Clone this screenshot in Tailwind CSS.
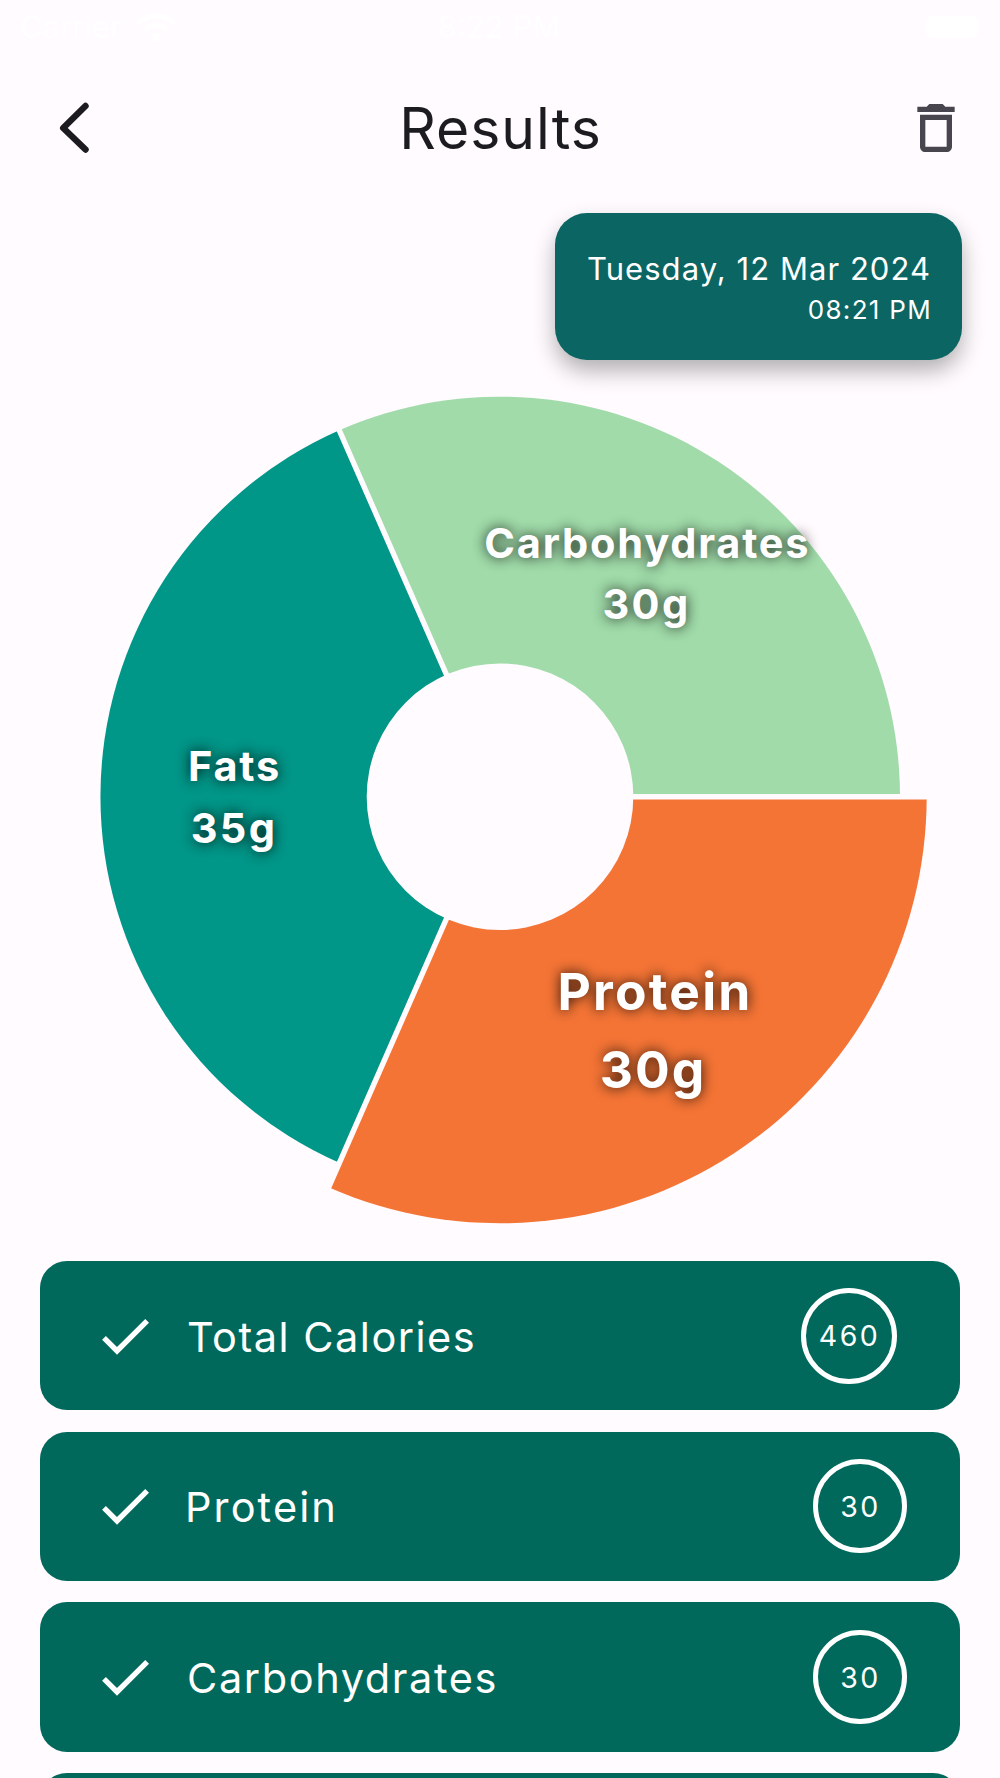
<!DOCTYPE html>
<html lang="en">
<head>
  <meta charset="UTF-8" />
  <meta name="viewport" content="width=device-width, initial-scale=1.0" />
  <title>Results</title>
  <script src="https://cdn.jsdelivr.net/npm/@tailwindcss/browser@4"></script>
</head>
<body class="bg-[#fffbff] font-['Inter',sans-serif]">
<div class="relative w-[1000px] h-[1778px] overflow-hidden">
  <!-- Status bar -->
  <div class="grid grid-cols-3 items-center h-[53px] pl-5 pr-[22px] text-white text-[31px] leading-none">
    <div class="flex items-center gap-[14px]">
      <span>Carrier</span>
      <svg class="w-10 h-7" viewBox="0 0 40 28" fill="none" stroke="currentColor" stroke-width="5">
        <path d="M2 10a26 26 0 0 1 36 0M9 17a16 16 0 0 1 22 0" />
        <circle cx="20" cy="24" r="2" />
      </svg>
    </div>
    <span class="text-center">8:22 PM</span>
    <div class="justify-self-end w-[52px] h-[22px] rounded-md bg-white"></div>
  </div>

  <!-- App bar -->
  <header class="flex items-center justify-between h-[149px] pl-[42px] pr-8">
    <svg class="w-16 h-16" viewBox="0 0 64 64" fill="none" stroke="#1c1b1f" stroke-width="6.4" stroke-linecap="round" stroke-linejoin="round">
      <path d="M43.5 10L21.2 32l22.3 21.5" />
    </svg>
    <h1 class="mr-[9px] pt-[2px] text-[57px] leading-none tracking-[1px] text-[#1c1b1f]">Results</h1>
    <svg class="w-16 h-16" viewBox="0 0 24 24" fill="#49454f">
      <path d="M6 19c0 1.1.9 2 2 2h8c1.1 0 2-.9 2-2V7H6v12zM8 9h8v10H8V9zm7.5-5l-1-1h-5l-1 1H5v2h14V4z" />
    </svg>
  </header>

  <main class="px-10">
    <!-- Date card -->
    <div class="ml-auto mt-[11px] -mr-[2px] w-[407px] h-[147px] rounded-[32px] bg-[#0b6562] shadow-[0_11px_22px_rgba(0,0,0,0.3)] pr-[31px] pt-[36px] text-right text-white">
      <p class="text-[31px] leading-[40px] tracking-[1.05px]">Tuesday, 12 Mar 2024</p>
      <p class="text-[26px] leading-[42px] tracking-[1.3px] -mr-[1px]">08:21 PM</p>
    </div>

    <!-- Macro chart -->
    <svg class="block w-[920px] h-[853px] mt-[11px]" viewBox="40 371 920 853">
      <path fill="#a0dba9" d="M500 796.5L339.3 430.2A400.3 400.3 0 0 1 900 796.5z" />
      <path fill="#009688" d="M500 796.5L339.3 1162.8A400.3 400.3 0 0 1 339.3 430.2z" />
      <path fill="#f47435" d="M500 796.5H926.7A426.7 426.7 0 0 1 328.6 1187.3z" />
      <g stroke="#fffbff" stroke-width="5.4">
        <path d="M500 796.7H930M500 796.7L338 427.3M500 796.7L327 1191.1" />
      </g>
      <circle cx="500" cy="796.7" r="133.3" fill="#fffbff" />
      <g fill="#fff" text-anchor="middle" class="font-bold text-[41.5px] tracking-[1.8px] [text-shadow:0_0_13px_rgba(0,0,0,0.9)]">
        <text x="647.3" y="558">Carbohydrates</text>
        <text x="646.5" y="619" class="tracking-[2.4px]">30g</text>
        <text x="234.5" y="781">Fats</text>
        <text x="234" y="843" class="tracking-[2.4px]">35g</text>
        <text x="655" y="1010" class="text-[51.5px] tracking-[2.2px]">Protein</text>
        <text x="653" y="1088" class="text-[51.5px] tracking-[2px]">30g</text>
      </g>
    </svg>

    <!-- Totals -->
    <ul class="flex flex-col gap-[21.33px] mt-[37px] text-white">
      <li class="flex items-center h-[149.33px] rounded-[27px] bg-[#00695c] pl-[53px] pr-[63px]">
        <svg class="w-16 h-16 mr-[30px]" viewBox="0 0 24 24" fill="currentColor"><path d="M9 16.17L4.83 12l-1.42 1.41L9 19 21 7l-1.41-1.41z" /></svg>
        <span class="pt-[2px] text-[41.5px] tracking-[1.5px]">Total Calories</span>
        <span class="ml-auto flex items-center justify-center w-24 h-24 rounded-full border-[5.3px] pl-[1px] pt-[2px] text-[28.5px] tracking-[2.4px]">460</span>
      </li>
      <li class="flex items-center h-[149.33px] rounded-[27px] bg-[#00695c] pl-[53px] pr-[53px]">
        <svg class="w-16 h-16 mr-[28px]" viewBox="0 0 24 24" fill="currentColor"><path d="M9 16.17L4.83 12l-1.42 1.41L9 19 21 7l-1.41-1.41z" /></svg>
        <span class="pt-[2px] text-[41.5px] tracking-[2.1px]">Protein</span>
        <span class="ml-auto flex items-center justify-center w-[94px] h-[94px] rounded-full border-[5.3px] pl-[1px] pt-[2px] text-[28.5px] tracking-[2.4px]">30</span>
      </li>
      <li class="flex items-center h-[149.33px] rounded-[27px] bg-[#00695c] pl-[53px] pr-[53px]">
        <svg class="w-16 h-16 mr-[30px]" viewBox="0 0 24 24" fill="currentColor"><path d="M9 16.17L4.83 12l-1.42 1.41L9 19 21 7l-1.41-1.41z" /></svg>
        <span class="pt-[2px] text-[41.5px] tracking-[1.6px]">Carbohydrates</span>
        <span class="ml-auto flex items-center justify-center w-[94px] h-[94px] rounded-full border-[5.3px] pl-[1px] pt-[2px] text-[28.5px] tracking-[2.4px]">30</span>
      </li>
      <li class="h-[149.33px] rounded-[27px] bg-[#00695c]"></li>
    </ul>
  </main>
</div>
</body>
</html>
